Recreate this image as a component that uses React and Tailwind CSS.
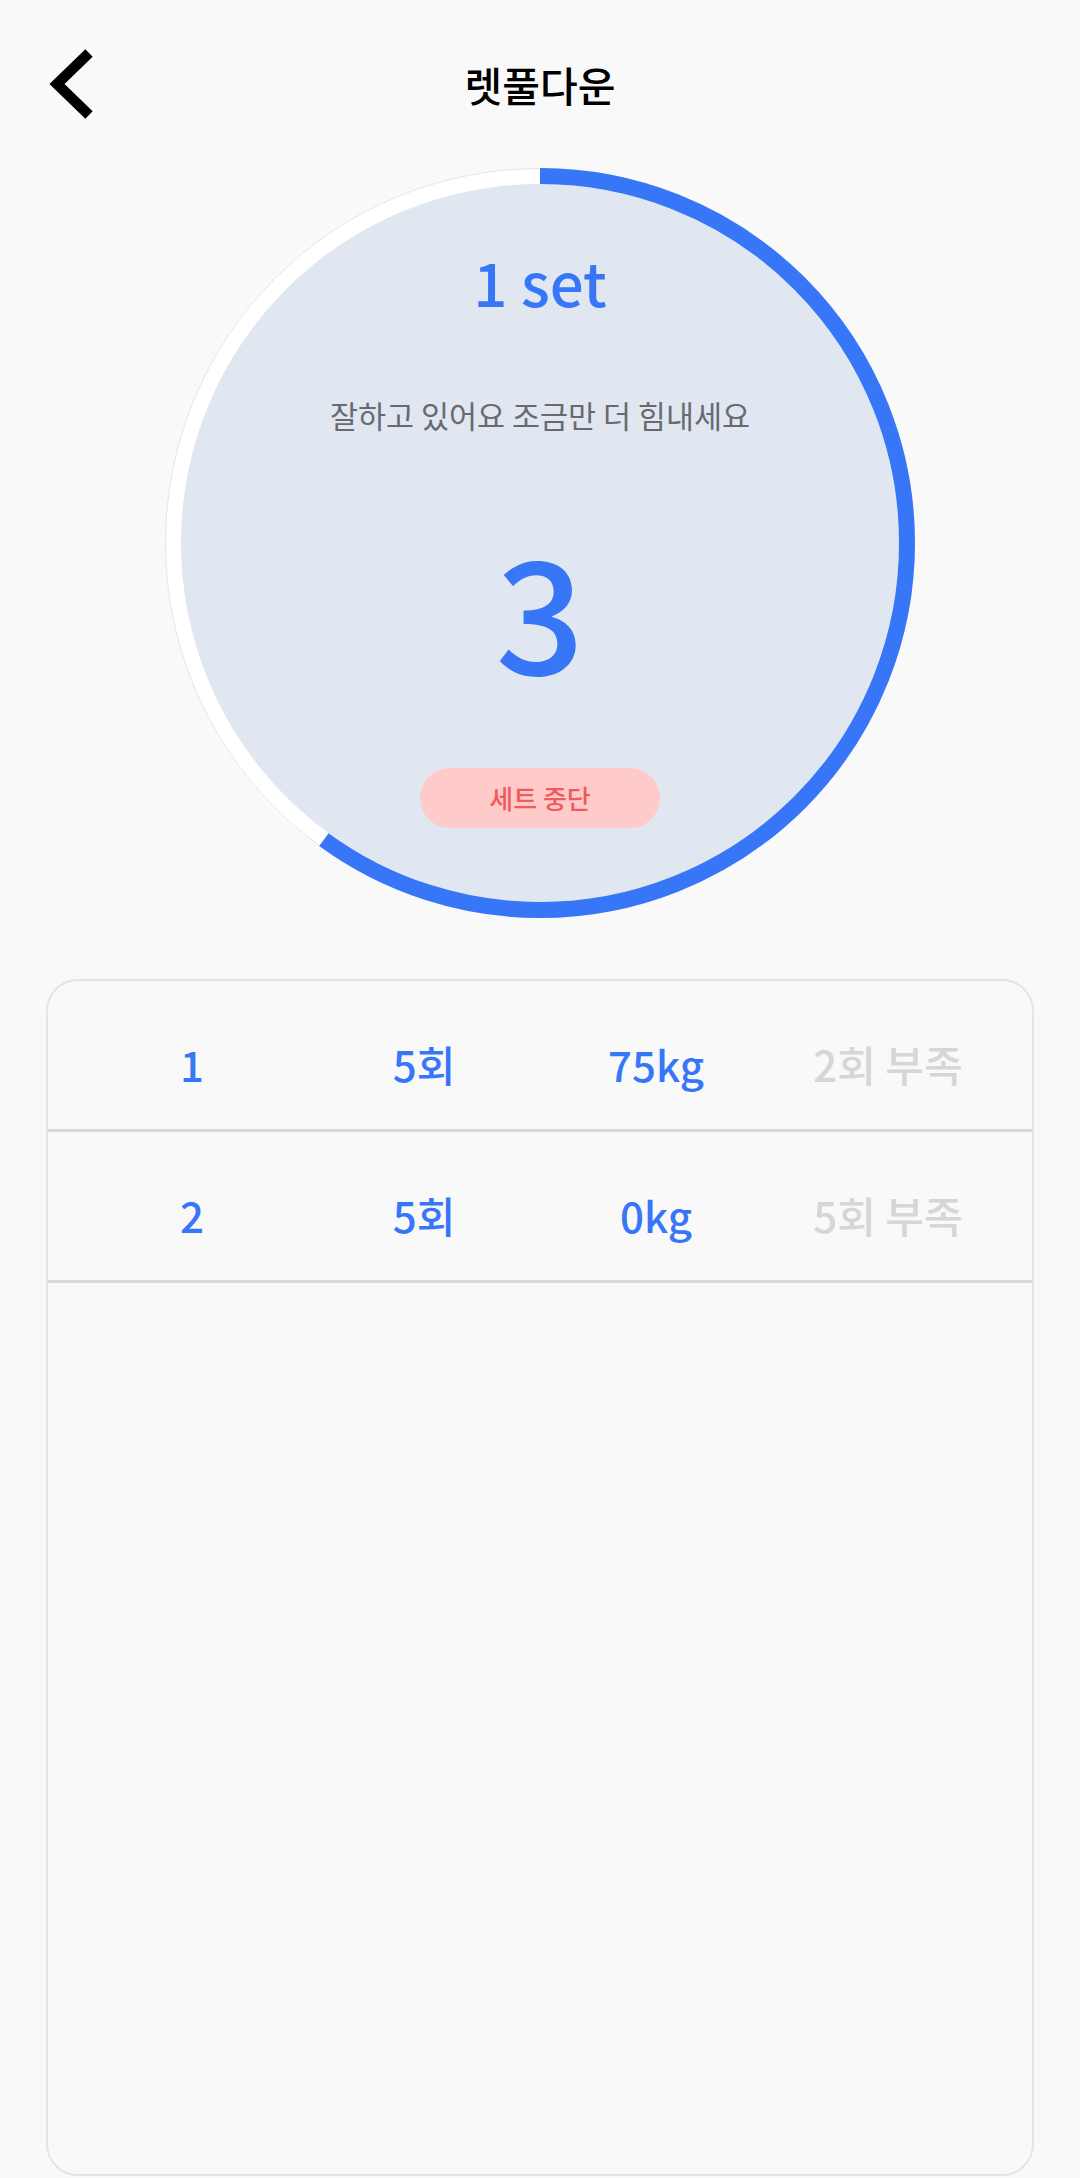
import React from 'react'

const rows = [
  { no: 1, reps: '5회', weight: '75kg', left: '2회 부족' },
  { no: 2, reps: '5회', weight: '0kg', left: '5회 부족' },
]

function BackIcon() {
  return (
    <svg width="48" height="72" viewBox="0 0 48 72" className="block">
      <polyline
        points="41,5 9,36 41,67"
        fill="none"
        stroke="#000"
        strokeWidth="10.5"
        strokeLinejoin="miter"
        strokeLinecap="butt"
      />
    </svg>
  )
}

function ProgressRing({ progress }) {
  const r = 367
  const c = 2 * Math.PI * r
  return (
    <svg width="750" height="750" viewBox="0 0 750 750" className="absolute -inset-px pointer-events-none">
      <circle
        cx="375"
        cy="375"
        r={r}
        fill="none"
        stroke="#3776f7"
        strokeWidth="16"
        strokeDasharray={`${c * progress} ${c}`}
        transform="rotate(-90 375 375)"
      />
    </svg>
  )
}

export default function App() {
  return (
    <div className="min-h-[2178px] bg-[#f9f9fa] flex flex-col font-['Noto_Sans_CJK_KR','Noto_Sans',sans-serif]">
      <header className="h-[168px] grid grid-cols-[1fr_auto_1fr] items-center">
        <div className="pl-[48px]">
          <BackIcon />
        </div>
        <h1 className="text-[41px] leading-none font-medium text-black">렛풀다운</h1>
        <div />
      </header>

      <div className="relative mx-auto w-[750px] h-[750px] rounded-full bg-white border border-[#e3e7ee] p-[15px]">
        <div className="w-full h-full rounded-full bg-[#e0e7f0] flex flex-col items-center">
          <p className="mt-[67px] text-[60px] leading-none font-medium text-[#3776f7]">1 set</p>
          <p className="mt-[89px] text-[30.5px] leading-none text-[#676a70]">잘하고 있어요 조금만 더 힘내세요</p>
          <p className="mt-[98px] text-[156px] leading-none font-medium text-[#3776f7]">3</p>
          <button className="mt-[83px] w-[240px] h-[60px] rounded-full bg-[#ffcaca] text-[26px] leading-none font-medium text-[#ef5a5a]">
            세트 중단
          </button>
        </div>
        <ProgressRing progress={0.6} />
      </div>

      <div className="mt-[61px] mx-[46px] h-[1197px] rounded-[32px] border-2 border-[#dde5ee] overflow-hidden">
        {rows.map((r) => (
          <div key={r.no} className="h-[151px] border-b-[3px] border-[#d9d9d9] px-[28px] pt-[62px] grid grid-cols-4 items-start text-[42px] leading-none font-medium">
            <span className="text-center text-[#3776f7]">{r.no}</span>
            <span className="text-center text-[#3776f7]">{r.reps}</span>
            <span className="text-center text-[#3776f7]">{r.weight}</span>
            <span className="text-center text-[#d6d6d6]">{r.left}</span>
          </div>
        ))}
      </div>
    </div>
  )
}
